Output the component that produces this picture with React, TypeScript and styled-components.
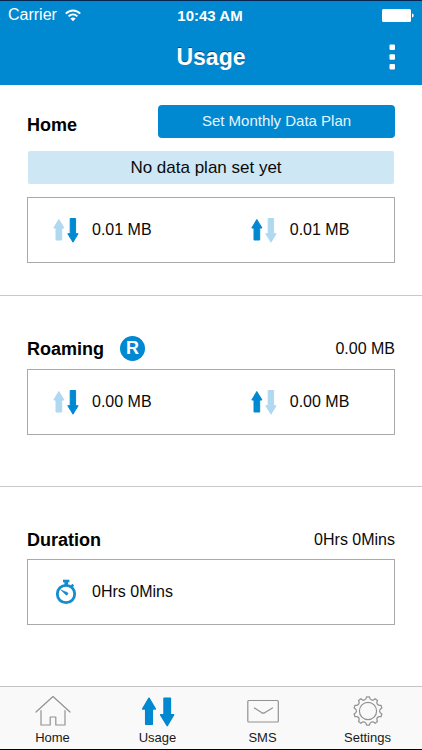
import React from "react";
import styled, { createGlobalStyle } from "styled-components";

const BLUE = "#0088d1";
const PALE = "#b0d9f1";

const GlobalStyle = createGlobalStyle`
  * { box-sizing: border-box; }
  body {
    margin: 0;
    background: #fff;
    color: #0a0a0a;
    font-family: "Liberation Sans", Arial, Helvetica, sans-serif;
  }
`;

const Screen = styled.div`
  display: flex;
  flex-direction: column;
  min-height: 100vh;
`;

const Header = styled.header`
  background: ${BLUE};
  border-top: 1px solid #06264f;
  color: #fff;
`;

const StatusBar = styled.div`
  display: grid;
  grid-template-columns: 1fr auto 1fr;
  align-items: center;
  height: 28px;
  padding: 0 10px 0 8px;
  font-size: 16px;
`;

const Carrier = styled.span`
  display: flex;
  align-items: center;
  gap: 8px;
`;

const Time = styled.time`
  font-size: 15px;
  font-weight: 700;
`;

const BatterySlot = styled.span`
  display: flex;
  justify-content: flex-end;
  margin-right: -2px;
`;

const TitleBar = styled.div`
  display: grid;
  grid-template-columns: 1fr auto 1fr;
  align-items: center;
  height: 56px;
  padding: 0 20px;
`;

const Title = styled.h1`
  grid-column: 2;
  margin: 0;
  font-size: 23px;
  line-height: 28px;
  text-shadow: 0 -1px 0 rgba(0, 40, 80, 0.6);
`;

const MenuButton = styled.button`
  justify-self: end;
  display: flex;
  padding: 0;
  border: 0;
  background: none;
  color: #fff;
  cursor: pointer;
`;

const Content = styled.main`
  flex: 1;
`;

const Section = styled.section<{ $top: number; $bottom: number }>`
  padding: ${(p) => p.$top}px 27px ${(p) => p.$bottom}px;
  & + & {
    border-top: 1px solid #c9c9c9;
  }
`;

const SectionHead = styled.div<{ $gap: number }>`
  display: flex;
  align-items: center;
  min-height: 25px;
  margin-bottom: ${(p) => p.$gap}px;
  font-size: 16px;
`;

const SectionTitle = styled.h2`
  margin: 0;
  font-size: 18px;
  line-height: 24px;
  color: #000;
`;

const HomeTitle = styled(SectionTitle)`
  width: 131px;
  padding-top: 6px;
`;

const Total = styled.span`
  margin-left: auto;
`;

const RoamingBadge = styled.span`
  display: grid;
  place-items: center;
  width: 25px;
  height: 25px;
  margin-left: 16px;
  border-radius: 50%;
  background: ${BLUE};
  color: #fff;
  font-size: 18px;
  font-weight: 700;
  line-height: 25px;
`;

const PlanButton = styled.button`
  flex: 1;
  height: 33px;
  padding: 0 0 3px;
  border: 0;
  border-radius: 4px;
  background: ${BLUE};
  color: #e6f5fd;
  font-family: inherit;
  font-size: 15px;
  cursor: pointer;
`;

const Notice = styled.p`
  margin: 0 1px 13px;
  border-radius: 2px;
  background: #cde7f5;
  font-size: 17px;
  line-height: 33px;
  text-align: center;
  padding-right: 10px;
`;

const Panel = styled.div`
  display: grid;
  grid-template-columns: 29fr 21fr;
  align-items: center;
  height: 66px;
  padding-left: 25px;
  border: 1px solid #a9a9a9;
`;

const Stat = styled.div`
  display: flex;
  align-items: center;
  gap: 12px;
  font-size: 16px;
  white-space: nowrap;
`;

const TabBar = styled.nav`
  display: grid;
  grid-template-columns: repeat(4, 1fr);
  height: 64px;
  padding-right: 2px;
  border-top: 1px solid #c4c4c4;
  border-bottom: 1px solid #000;
  background: #f9f9f9;
`;

const Tab = styled.a`
  display: flex;
  flex-direction: column;
  align-items: center;
  justify-content: flex-end;
  gap: 3px;
  padding-bottom: 3px;
  color: #1a1a1a;
  font-size: 13px;
  line-height: 16px;
  text-decoration: none;
`;

function WifiIcon() {
  return (
    <svg width="16" height="13" viewBox="0 0 16 13" fill="none" stroke="#fff" strokeWidth="2" aria-hidden="true">
      <path d="M0.8 4.6C5 .3 11 .3 15.2 4.6" />
      <path d="M3.6 7.4C6.2 4.9 9.8 4.9 12.4 7.4" />
      <path d="M8 12.2L5.3 9.5C6.9 8 9.1 8 10.7 9.5Z" fill="#fff" stroke="none" />
    </svg>
  );
}

function BatteryIcon() {
  return (
    <svg width="32" height="13" viewBox="0 0 32 13" fill="#fff" aria-hidden="true">
      <rect x="0" y="0" width="29" height="13" rx="1.5" />
      <path d="M30 4.5C32.2 5 32.2 8 30 8.5Z" />
    </svg>
  );
}

function MoreIcon() {
  return (
    <svg width="20" height="26" viewBox="0 0 20 26" fill="currentColor" aria-hidden="true">
      <rect x="7.5" y="0.5" width="5.5" height="5.5" rx="1" />
      <rect x="7.5" y="10.2" width="5.5" height="5.5" rx="1" />
      <rect x="7.5" y="20" width="5.5" height="5.5" rx="1" />
    </svg>
  );
}

function DataArrows({ up, down }: { up: string; down: string }) {
  return (
    <svg width="27" height="26" viewBox="0 0 27 26" strokeWidth="1" strokeLinejoin="round" aria-hidden="true">
      <path d="M5.8 2.5L11 11H8.7V23H3V11H0.8Z" fill={up} stroke={up} />
      <path d="M17.2 1.5H22.6V16.7H25.1L20 25.2L14.8 16.7H17.2Z" fill={down} stroke={down} />
    </svg>
  );
}

function UsageTabIcon() {
  return (
    <svg width="34" height="30" viewBox="0 0 34 30" fill={BLUE} stroke={BLUE} strokeWidth="1.5" strokeLinejoin="round" aria-hidden="true">
      <path d="M8 1.2L14.3 12H11.3V27.2H4.7V12H1.7Z" />
      <path d="M23 1.2H29.4V17.8H32.6L26.2 28.6L19.6 17.8H23Z" />
    </svg>
  );
}

function StopwatchIcon() {
  return (
    <svg width="27" height="26" viewBox="0 0 27 26" fill="none" stroke="#158ccc" aria-hidden="true">
      <circle cx="13" cy="15" r="8.7" strokeWidth="2.8" />
      <path d="M10 2H16.4" strokeWidth="2.6" />
      <path d="M13.2 2V6.5" strokeWidth="3.6" />
      <path d="M18.2 7.8L20.3 5.6" strokeWidth="2.6" />
      <path d="M7.6 10.7L14.4 13.5C15.5 14.2 14.9 16.4 13.1 16.1Z" fill="#158ccc" stroke="#158ccc" strokeWidth="0.5" />
    </svg>
  );
}

const lineIcon = {
  fill: "none",
  stroke: "#929292",
  strokeWidth: 1.2,
  strokeLinejoin: "round" as const,
  strokeLinecap: "round" as const,
  "aria-hidden": true,
};

function HomeTabIcon() {
  return (
    <svg width="36" height="32" viewBox="0 0 36 32" {...lineIcon}>
      <path d="M1 17L18 1.5L35 17" />
      <path d="M6 15.5V30H15.2V22H20.8V30H30V15.5" />
    </svg>
  );
}

function MailTabIcon() {
  return (
    <svg width="32" height="32" viewBox="0 0 32 32" {...lineIcon}>
      <rect x="0.8" y="5.5" width="30.5" height="21.5" rx="1" />
      <path d="M7.5 13L14.5 17.6Q16.2 18.5 18 17.6L25.5 13" />
    </svg>
  );
}

const TEETH = 10;
const gearPath = Array.from({ length: TEETH }, (_, i) => {
  const at = (r: number, offset: number) => {
    const a = ((i + offset) / TEETH) * Math.PI * 2 - Math.PI / 2;
    return `${(16 + r * Math.cos(a)).toFixed(2)} ${(16 + r * Math.sin(a)).toFixed(2)}`;
  };
  return `${i === 0 ? "M" : "L"}${at(14.2, -0.16)}L${at(14.2, 0.16)}L${at(12.4, 0.26)}Q${at(10.8, 0.5)} ${at(12.4, 0.74)}`;
}).join("") + "Z";

function SettingsTabIcon() {
  return (
    <svg width="32" height="32" viewBox="0 0 32 32" {...lineIcon}>
      <path d={gearPath} />
      <circle cx="16" cy="16" r="8.6" />
    </svg>
  );
}

function TrafficPanel({ received, sent }: { received: string; sent: string }) {
  return (
    <Panel>
      <Stat>
        <DataArrows up={PALE} down={BLUE} />
        {received}
      </Stat>
      <Stat>
        <DataArrows up={BLUE} down={PALE} />
        {sent}
      </Stat>
    </Panel>
  );
}

export default function App() {
  return (
    <>
      <GlobalStyle />
      <Screen>
        <Header>
          <StatusBar>
            <Carrier>
              Carrier
              <WifiIcon />
            </Carrier>
            <Time>10:43 AM</Time>
            <BatterySlot>
              <BatteryIcon />
            </BatterySlot>
          </StatusBar>
          <TitleBar>
            <Title>Usage</Title>
            <MenuButton type="button" aria-label="More options">
              <MoreIcon />
            </MenuButton>
          </TitleBar>
        </Header>

        <Content>
          <Section $top={20} $bottom={32}>
            <SectionHead $gap={13}>
              <HomeTitle>Home</HomeTitle>
              <PlanButton type="button">Set Monthly Data Plan</PlanButton>
            </SectionHead>
            <Notice>No data plan set yet</Notice>
            <TrafficPanel received="0.01 MB" sent="0.01 MB" />
          </Section>

          <Section $top={40} $bottom={51}>
            <SectionHead $gap={8}>
              <SectionTitle>Roaming</SectionTitle>
              <RoamingBadge>R</RoamingBadge>
              <Total>0.00 MB</Total>
            </SectionHead>
            <TrafficPanel received="0.00 MB" sent="0.00 MB" />
          </Section>

          <Section $top={40} $bottom={51}>
            <SectionHead $gap={7}>
              <SectionTitle>Duration</SectionTitle>
              <Total>0Hrs 0Mins</Total>
            </SectionHead>
            <Panel>
              <Stat>
                <StopwatchIcon />
                0Hrs 0Mins
              </Stat>
            </Panel>
          </Section>
        </Content>

        <TabBar aria-label="Main">
          <Tab href="#home">
            <HomeTabIcon />
            Home
          </Tab>
          <Tab href="#usage" aria-current="page">
            <UsageTabIcon />
            Usage
          </Tab>
          <Tab href="#sms">
            <MailTabIcon />
            SMS
          </Tab>
          <Tab href="#settings">
            <SettingsTabIcon />
            Settings
          </Tab>
        </TabBar>
      </Screen>
    </>
  );
}
